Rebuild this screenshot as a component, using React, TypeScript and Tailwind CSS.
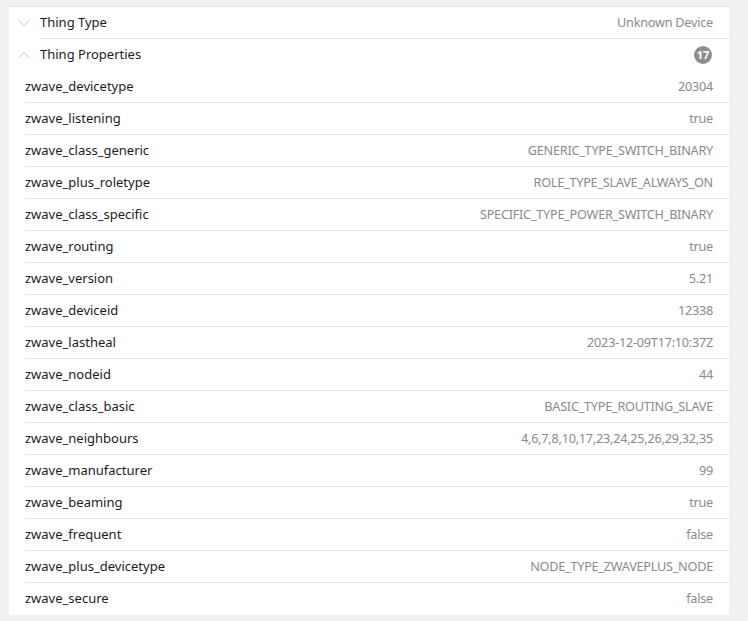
import { ChevronDown, ChevronUp } from 'lucide-react';

const props: [string, string][] = [
  ['zwave_devicetype', '20304'],
  ['zwave_listening', 'true'],
  ['zwave_class_generic', 'GENERIC_TYPE_SWITCH_BINARY'],
  ['zwave_plus_roletype', 'ROLE_TYPE_SLAVE_ALWAYS_ON'],
  ['zwave_class_specific', 'SPECIFIC_TYPE_POWER_SWITCH_BINARY'],
  ['zwave_routing', 'true'],
  ['zwave_version', '5.21'],
  ['zwave_deviceid', '12338'],
  ['zwave_lastheal', '2023-12-09T17:10:37Z'],
  ['zwave_nodeid', '44'],
  ['zwave_class_basic', 'BASIC_TYPE_ROUTING_SLAVE'],
  ['zwave_neighbours', '4,6,7,8,10,17,23,24,25,26,29,32,35'],
  ['zwave_manufacturer', '99'],
  ['zwave_beaming', 'true'],
  ['zwave_frequent', 'false'],
  ['zwave_plus_devicetype', 'NODE_TYPE_ZWAVEPLUS_NODE'],
  ['zwave_secure', 'false'],
];

export default function App() {
  return (
    <div className="min-h-[621px] bg-[#f1f1f1] pt-[6px] pl-[9px] font-['Noto_Sans',sans-serif] text-[13px]">
      <div className="w-[720px] bg-white border-t border-[#e6e6e6]">
        {/* Thing Type */}
        <div className="flex h-[32px] items-center pl-[5px]">
          <ChevronDown size={20} strokeWidth={1.2} className="text-[#c4c4c8]" />
          <div className="ml-[6px] flex h-full flex-1 items-center justify-between border-b border-[#e8e8e8] pr-[16px]">
            <span className="text-[#1c1c1c]">Thing Type</span>
            <span className="text-[12.7px] tracking-[-0.25px] text-[#8a8a8f]">Unknown Device</span>
          </div>
        </div>
        {/* Thing Properties */}
        <div className="flex h-[32px] items-center pl-[5px]">
          <ChevronUp size={20} strokeWidth={1.2} className="text-[#c4c4c8]" />
          <div className="ml-[6px] flex h-full flex-1 items-center justify-between pr-[16px]">
            <span className="text-[#1c1c1c]">Thing Properties</span>
            <span className="mr-[1px] flex h-[18px] w-[18px] items-center justify-center rounded-full bg-[#8e8e8e] text-[11px] font-bold text-white">17</span>
          </div>
        </div>
        {props.map(([k, v], i) => (
          <div
            key={k}
            className={`ml-[16px] flex h-[32px] items-center justify-between pr-[16px] ${i < props.length - 1 ? 'border-b border-[#e8e8e8]' : ''}`}
          >
            <span className="text-[#1c1c1c]">{k}</span>
            <span className="text-[12.7px] tracking-[-0.25px] text-[#8a8a8f]">{v}</span>
          </div>
        ))}
      </div>
    </div>
  );
}
